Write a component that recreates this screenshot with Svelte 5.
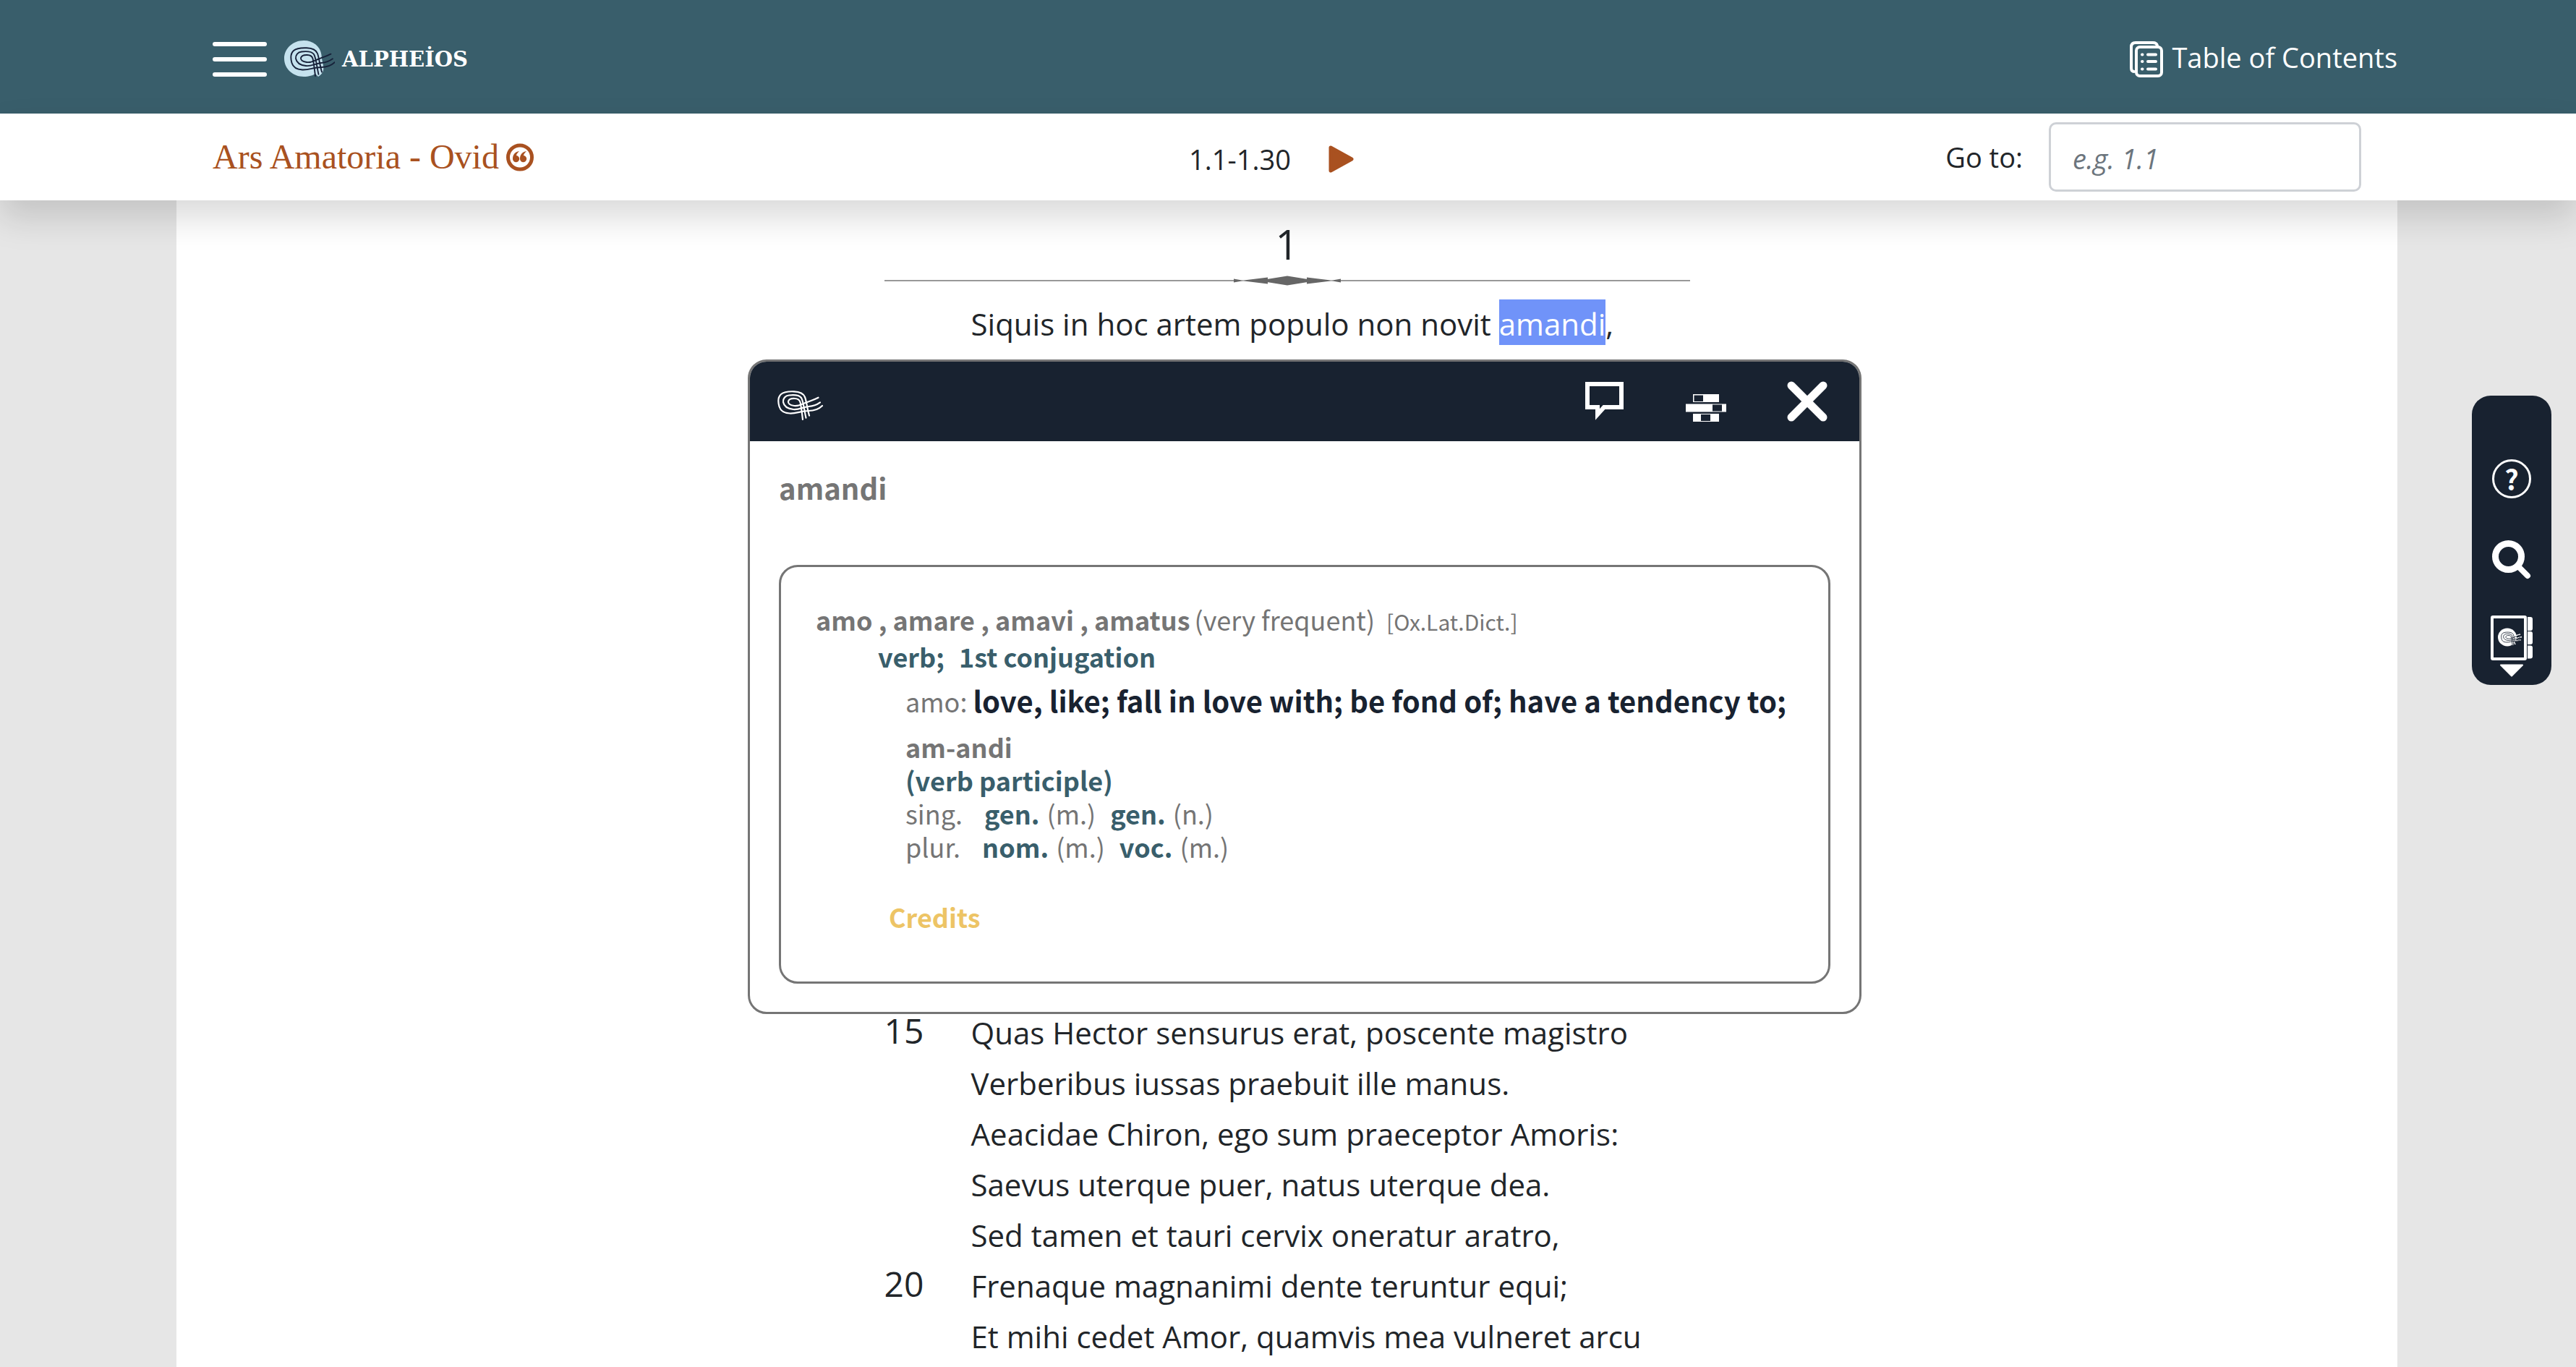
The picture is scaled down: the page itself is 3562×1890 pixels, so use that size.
<script>
  const verses = [
    { n: 1, text: 'Siquis in hoc artem populo non novit amandi,' },
    { n: 15, text: 'Quas Hector sensurus erat, poscente magistro' },
    { n: 16, text: 'Verberibus iussas praebuit ille manus.' },
    { n: 17, text: 'Aeacidae Chiron, ego sum praeceptor Amoris:' },
    { n: 18, text: 'Saevus uterque puer, natus uterque dea.' },
    { n: 19, text: 'Sed tamen et tauri cervix oneratur aratro,' },
    { n: 20, text: 'Frenaque magnanimi dente teruntur equi;' },
    { n: 21, text: 'Et mihi cedet Amor, quamvis mea vulneret arcu' }
  ];
  const selected = 'amandi';

  const lines = verses.map(({ n, text }) => {
    const at = text.indexOf(selected);
    return {
      number: n % 5 === 0 ? n : '',
      before: at < 0 ? text : text.slice(0, at),
      mark: at < 0 ? '' : selected,
      after: at < 0 ? '' : text.slice(at + selected.length)
    };
  });

  const forms = [
    { number: 'sing.', cases: [['gen.', '(m.)'], ['gen.', '(n.)']] },
    { number: 'plur.', cases: [['nom.', '(m.)'], ['voc.', '(m.)']] }
  ];
</script>

{#snippet knot()}
  <path d="M62 21C56 27 50 28 43 28C33 28 26 32 17 31.500C7 31 4 27 2.500 22C.8 16 .6 9 5 5C9 1.600 16 1 23 1.300C31 1.500 36 4 38 9C40 14 41 24 44 34.600" />
  <path d="M59 16.300C54 20 49 21.500 43 22C35 23 29 27 22 26C13 25 9 21 8 16C7.400 11 11 7 16 6.500C22 5.800 30 6 33 10C36 15 37 27 39.500 37.700" />
  <path d="M56.500 9.700C50 13 46 14 40 16.500C33 19 29 22 23 21C17 20 14.500 18 15 15C16 11.500 20 10.800 24 11C28 11.200 30.500 12.500 31.500 16C33 22 34 32 35 40" />
{/snippet}

<div class="page">
  <header class="top">
    <button class="plain menu" aria-label="Menu"><span></span><span></span><span></span></button>
    <a class="brand" href="#home">
      <svg width="70" height="52" viewBox="0 0 70 52" aria-hidden="true">
        <path d="M47 50C60 42 52 33 51.500 20C50 8 40 0 27 0C12 0 0 11 0 25S12 50 27 50C34 50 40 48 43 46Z" fill="#c5e2ee" />
        <g transform="translate(8 9)" fill="none" stroke="#17223a" stroke-width="1.900" stroke-linecap="round">{@render knot()}</g>
      </svg>
      <span>ALPHEİOS</span>
    </a>
    <a class="toc" href="#contents">
      <svg width="46" height="50" viewBox="0 0 46 50" fill="none" stroke="#fff" stroke-width="4" stroke-linecap="round" aria-hidden="true">
        <rect x="9" y="8" width="35" height="40" rx="5" />
        <path d="M6 42Q2 42 2 37V8Q2 2 8 2H32Q37 2 38 6" />
        <path d="M17 18.500h.5M25 18.500h11M17 28h.5M25 28h11M17 38.500h.5M25 38.500h11" />
      </svg>
      <span>Table of Contents</span>
    </a>
  </header>

  <div class="bar">
    <h1>
      Ars Amatoria - Ovid
      <button class="plain cite" aria-label="Citation">
        <svg width="38" height="39" viewBox="0 0 38 39" aria-hidden="true">
          <circle cx="19" cy="19.500" r="16.500" fill="none" stroke="#a95120" stroke-width="5" />
          <path d="M18 11C12 12 9 16 9 21A4.600 4.600 0 1 0 14 17C14 15 16 13 18 11ZM28 11C22 12 19 16 19 21A4.600 4.600 0 1 0 24 17C24 15 26 13 28 11Z" fill="#a95120" />
        </svg>
      </button>
    </h1>
    <nav class="pager">
      <span>1.1-1.30</span>
      <button class="plain next" aria-label="Next passage">
        <svg width="36" height="38" viewBox="0 0 36 38" aria-hidden="true">
          <path d="M3 3L32 19L3 35Z" fill="#a95120" stroke="#a95120" stroke-width="5" stroke-linejoin="round" />
        </svg>
      </button>
    </nav>
    <form class="goto">
      <label for="passage">Go to:</label>
      <input id="passage" type="text" placeholder="e.g. 1.1" />
    </form>
  </div>

  <main>
    <div class="text">
      <h2>1</h2>
      <div class="rule">
        <svg width="148" height="14" viewBox="0 0 148 14" fill="#666" aria-hidden="true">
          <path d="M46 5L74 .5L102 5V9L74 13.500L46 9Z" />
          <path d="M10 7L47 2.500V11.500ZM138 7L101 2.500V11.500Z" />
          <path d="M0 4.500L14 7L0 9.500ZM148 4.500L134 7L148 9.500Z" />
        </svg>
      </div>
      {#each lines as line}
        <div class="verse" class:looked-up={line.mark}>
          <span class="num">{line.number}</span>
          <p>{line.before}{#if line.mark}<mark>{line.mark}</mark>{line.after}{/if}</p>
        </div>
      {/each}
    </div>
  </main>

  <section class="popup" aria-label="Word lookup">
    <div class="popup-head">
      <svg class="emblem" width="64" height="42" viewBox="0 0 64 42" fill="none" stroke="#fff" stroke-width="2.200" stroke-linecap="round" aria-hidden="true">{@render knot()}</svg>
      <button class="plain" aria-label="Message">
        <svg width="56" height="56" viewBox="0 0 56 56" fill="none" stroke="#fff" stroke-width="6" aria-hidden="true">
          <path d="M4 4H51V36H27L18 46V36H4Z" />
        </svg>
      </button>
      <button class="plain" aria-label="Inflections">
        <svg width="56" height="56" viewBox="0 0 56 56" aria-hidden="true">
          <path d="M10 18h36v11h-36ZM0 31.500h56v11H0ZM10 45h36v11h-36Z" fill="#fff" />
          <path d="M11.500 19.500h12.500v8.500h-12.500ZM37 32.500h13v9h-13ZM21 46h13v9h-13Z" fill="#182230" />
        </svg>
      </button>
      <button class="plain" aria-label="Close">
        <svg width="56" height="56" viewBox="0 0 56 56" fill="none" stroke="#fff" stroke-width="11" stroke-linecap="round" aria-hidden="true">
          <path d="M6 6L50 50M50 6L6 50" />
        </svg>
      </button>
    </div>
    <div class="popup-body">
      <h3>amandi</h3>
      <div class="entry">
        <p class="lemma"><b>amo , amare , amavi , amatus</b><span>(very frequent)</span><a href="#dictionary">[Ox.Lat.Dict.]</a></p>
        <p class="part"><span>verb;</span><span>1st conjugation</span></p>
        <p class="sense"><span>amo:</span><b>love, like; fall in love with; be fond of; have a tendency to;</b></p>
        <div class="forms">
          <p><b>am-andi</b></p>
          <p class="teal">(verb participle)</p>
          {#each forms as form}
            <p class="row">
              <span class="kind">{form.number}</span>
              {#each form.cases as [name, gender]}
                <span class="case"><span class="teal">{name}</span><span>{gender}</span></span>
              {/each}
            </p>
          {/each}
        </div>
        <a class="credits" href="#credits">Credits</a>
      </div>
    </div>
  </section>

  <aside class="tools">
    <button class="plain help" aria-label="Help">?</button>
    <button class="plain" aria-label="Search">
      <svg width="54" height="54" viewBox="0 0 54 54" fill="none" stroke="#fff" stroke-linecap="round" aria-hidden="true">
        <circle cx="22.500" cy="22.500" r="18" stroke-width="9" />
        <path d="M38 38L49 49" stroke-width="8" />
      </svg>
    </button>
    <button class="plain" aria-label="Grammar and tools">
      <svg width="58" height="86" viewBox="0 0 58 86" aria-hidden="true">
        <rect x="2" y="2" width="46" height="58" rx="1" fill="none" stroke="#fff" stroke-width="4" />
        <path d="M51 2h4q3 0 3 3v13q0 3-3 3h-4ZM51 22h4q3 0 3 3v12q0 3-3 3h-4ZM51 41.500h4q3 0 3 3v12q0 3-3 3h-4Z" fill="#fff" />
        <ellipse cx="23" cy="30" rx="13" ry="12.500" fill="#fff" />
        <path d="M31 29L41 26M31 33L43 29.500M31 36L42 33.500M29 36L31 41M32 35L34 40" stroke="#fff" stroke-width="1.500" fill="none" />
        <g transform="translate(14 22.500) scale(.46)" fill="none" stroke="#182230" stroke-width="1.800">{@render knot()}</g>
        <path d="M14 68.500H44L29 83.500Z" fill="#fff" stroke="#fff" stroke-width="2" stroke-linejoin="round" />
      </svg>
    </button>
  </aside>
</div>

<style>
  :global(body) {
    margin: 0;
  }
  .page {
    position: relative;
    min-height: 100vh;
    background: #e6e6e6;
    color: #212529;
    font-family: 'Open Sans', 'Noto Sans', sans-serif;
    font-size: 38px;
    line-height: 60px;
    display: flex;
    flex-direction: column;
  }
  h1, h2, h3, p {
    margin: 0;
    font-weight: 400;
  }
  a {
    color: inherit;
    text-decoration: none;
  }
  svg {
    display: block;
    flex: none;
  }
  .plain {
    display: block;
    padding: 0;
    border: 0;
    background: none;
    color: inherit;
    font: inherit;
    cursor: pointer;
  }
  .top {
    box-sizing: border-box;
    display: flex;
    align-items: center;
    height: 157px;
    padding: 6px 247px 0 294px;
    background: #395e6b;
    color: #fff;
  }
  .menu {
    display: grid;
    gap: 15px;
    width: 75px;
    margin-right: 24px;
  }
  .menu span {
    height: 6px;
    border-radius: 3px;
    background: #fff;
  }
  .brand {
    display: flex;
    align-items: center;
    gap: 10px;
    font-family: 'DejaVu Serif', serif;
    font-weight: 700;
    font-size: 29px;
  }
  .toc {
    display: flex;
    align-items: center;
    gap: 12px;
    margin-left: auto;
  }
  .toc span {
    padding-bottom: 6px;
  }
  .bar {
    position: relative;
    display: grid;
    grid-template-columns: 1fr auto 1fr;
    align-items: center;
    height: 120px;
    padding: 0 297px 0 294px;
    background: #fff;
    box-shadow: 0 24px 48px rgba(0, 0, 0, 0.15);
  }
  h1 {
    display: flex;
    align-items: center;
    gap: 10px;
    color: #a95120;
    font-family: 'Liberation Serif', serif;
    font-size: 48px;
  }
  .pager {
    display: flex;
    align-items: center;
    gap: 52px;
    padding-top: 6px;
  }
  .next {
    padding-right: 42px;
  }
  .goto {
    display: flex;
    align-items: center;
    justify-content: flex-end;
    gap: 36px;
  }
  .goto input {
    box-sizing: border-box;
    width: 432px;
    height: 96px;
    padding: 4px 30px 0;
    border: 3px solid #ced1d6;
    border-radius: 10px;
    background: #fff;
    color: #212529;
    font: inherit;
  }
  .goto input::placeholder {
    color: #6c757d;
    font-style: italic;
    opacity: 1;
  }
  main {
    flex: 1;
    margin: 0 247px 0 244px;
    padding-top: 22px;
    background: #fff;
  }
  .text {
    width: 1114px;
    max-width: 100%;
    margin: 0 auto;
    font-size: 42px;
    line-height: 70px;
  }
  h2 {
    font-size: 56px;
    line-height: 76px;
    text-align: center;
  }
  /* the heading, rule and verses sit above the bar's shadow */
  h2, .rule, .verse {
    position: relative;
  }
  .rule {
    display: flex;
    align-items: center;
    margin: 6px 0 18px;
  }
  .rule::before,
  .rule::after {
    content: '';
    flex: 1;
    height: 2px;
    background: #999;
  }
  .verse {
    display: grid;
    grid-template-columns: 120px 1fr;
    height: 70px;
    white-space: nowrap;
  }
  /* room under the looked-up line for the word panel: thirteen verses */
  .looked-up {
    margin-bottom: 910px;
  }
  .num {
    font-size: 48px;
    line-height: 64px;
  }
  mark {
    padding: 5px 0 1px;
    background: #7093f9;
    color: #fff;
  }
  .popup {
    position: absolute;
    top: 497px;
    left: 1034px;
    box-sizing: border-box;
    width: 1540px;
    border: 3px solid #757575;
    border-radius: 26px;
    background: #fff;
    overflow: hidden;
    color: #757575;
    font-family: 'Noto Sans CJK JP', sans-serif;
    font-size: 36px;
    line-height: 46px;
    white-space: nowrap;
  }
  .popup-head {
    display: flex;
    align-items: center;
    gap: 84px;
    height: 110px;
    padding: 0 44px 0 38px;
    background: #182230;
  }
  .emblem {
    margin: 12px auto 0 0;
  }
  .popup-body {
    padding: 34px 40px 39px;
  }
  h3 {
    margin-bottom: 77px;
    font-size: 40px;
    line-height: 60px;
    font-weight: 700;
  }
  b, .teal, .part, .credits {
    font-weight: 700;
  }
  .entry {
    padding: 49px 48px 67px;
    border: 3px solid #757575;
    border-radius: 26px;
  }
  .entry p {
    display: flex;
    align-items: baseline;
  }
  .lemma {
    gap: 6px;
  }
  .lemma a {
    margin-left: 10px;
    font-size: 30px;
  }
  .part {
    gap: 20px;
    margin: 2px 0 8px 86px;
    color: #395e6b;
  }
  .sense {
    gap: 8px;
    margin-left: 124px;
    line-height: 60px;
  }
  .sense b {
    color: #182230;
    font-size: 40px;
  }
  .forms {
    margin: 10px 0 51px 124px;
  }
  .teal {
    color: #395e6b;
  }
  .row {
    gap: 20px;
  }
  .kind {
    margin-right: 10px;
  }
  .case {
    display: flex;
    gap: 10px;
  }
  .credits {
    display: block;
    margin-left: 101px;
    color: #edc465;
  }
  .tools {
    position: absolute;
    top: 547px;
    right: 34px;
    box-sizing: border-box;
    display: flex;
    flex-direction: column;
    align-items: center;
    gap: 50px;
    width: 110px;
    padding: 88px 0 10px;
    border-radius: 26px;
    background: #182230;
    color: #fff;
  }
  .help {
    box-sizing: border-box;
    width: 54px;
    height: 54px;
    margin-bottom: 8px;
    border: 3px solid #fff;
    border-radius: 50%;
    font-family: 'Noto Sans CJK JP', sans-serif;
    font-weight: 700;
    font-size: 38px;
    line-height: 46px;
  }
</style>
